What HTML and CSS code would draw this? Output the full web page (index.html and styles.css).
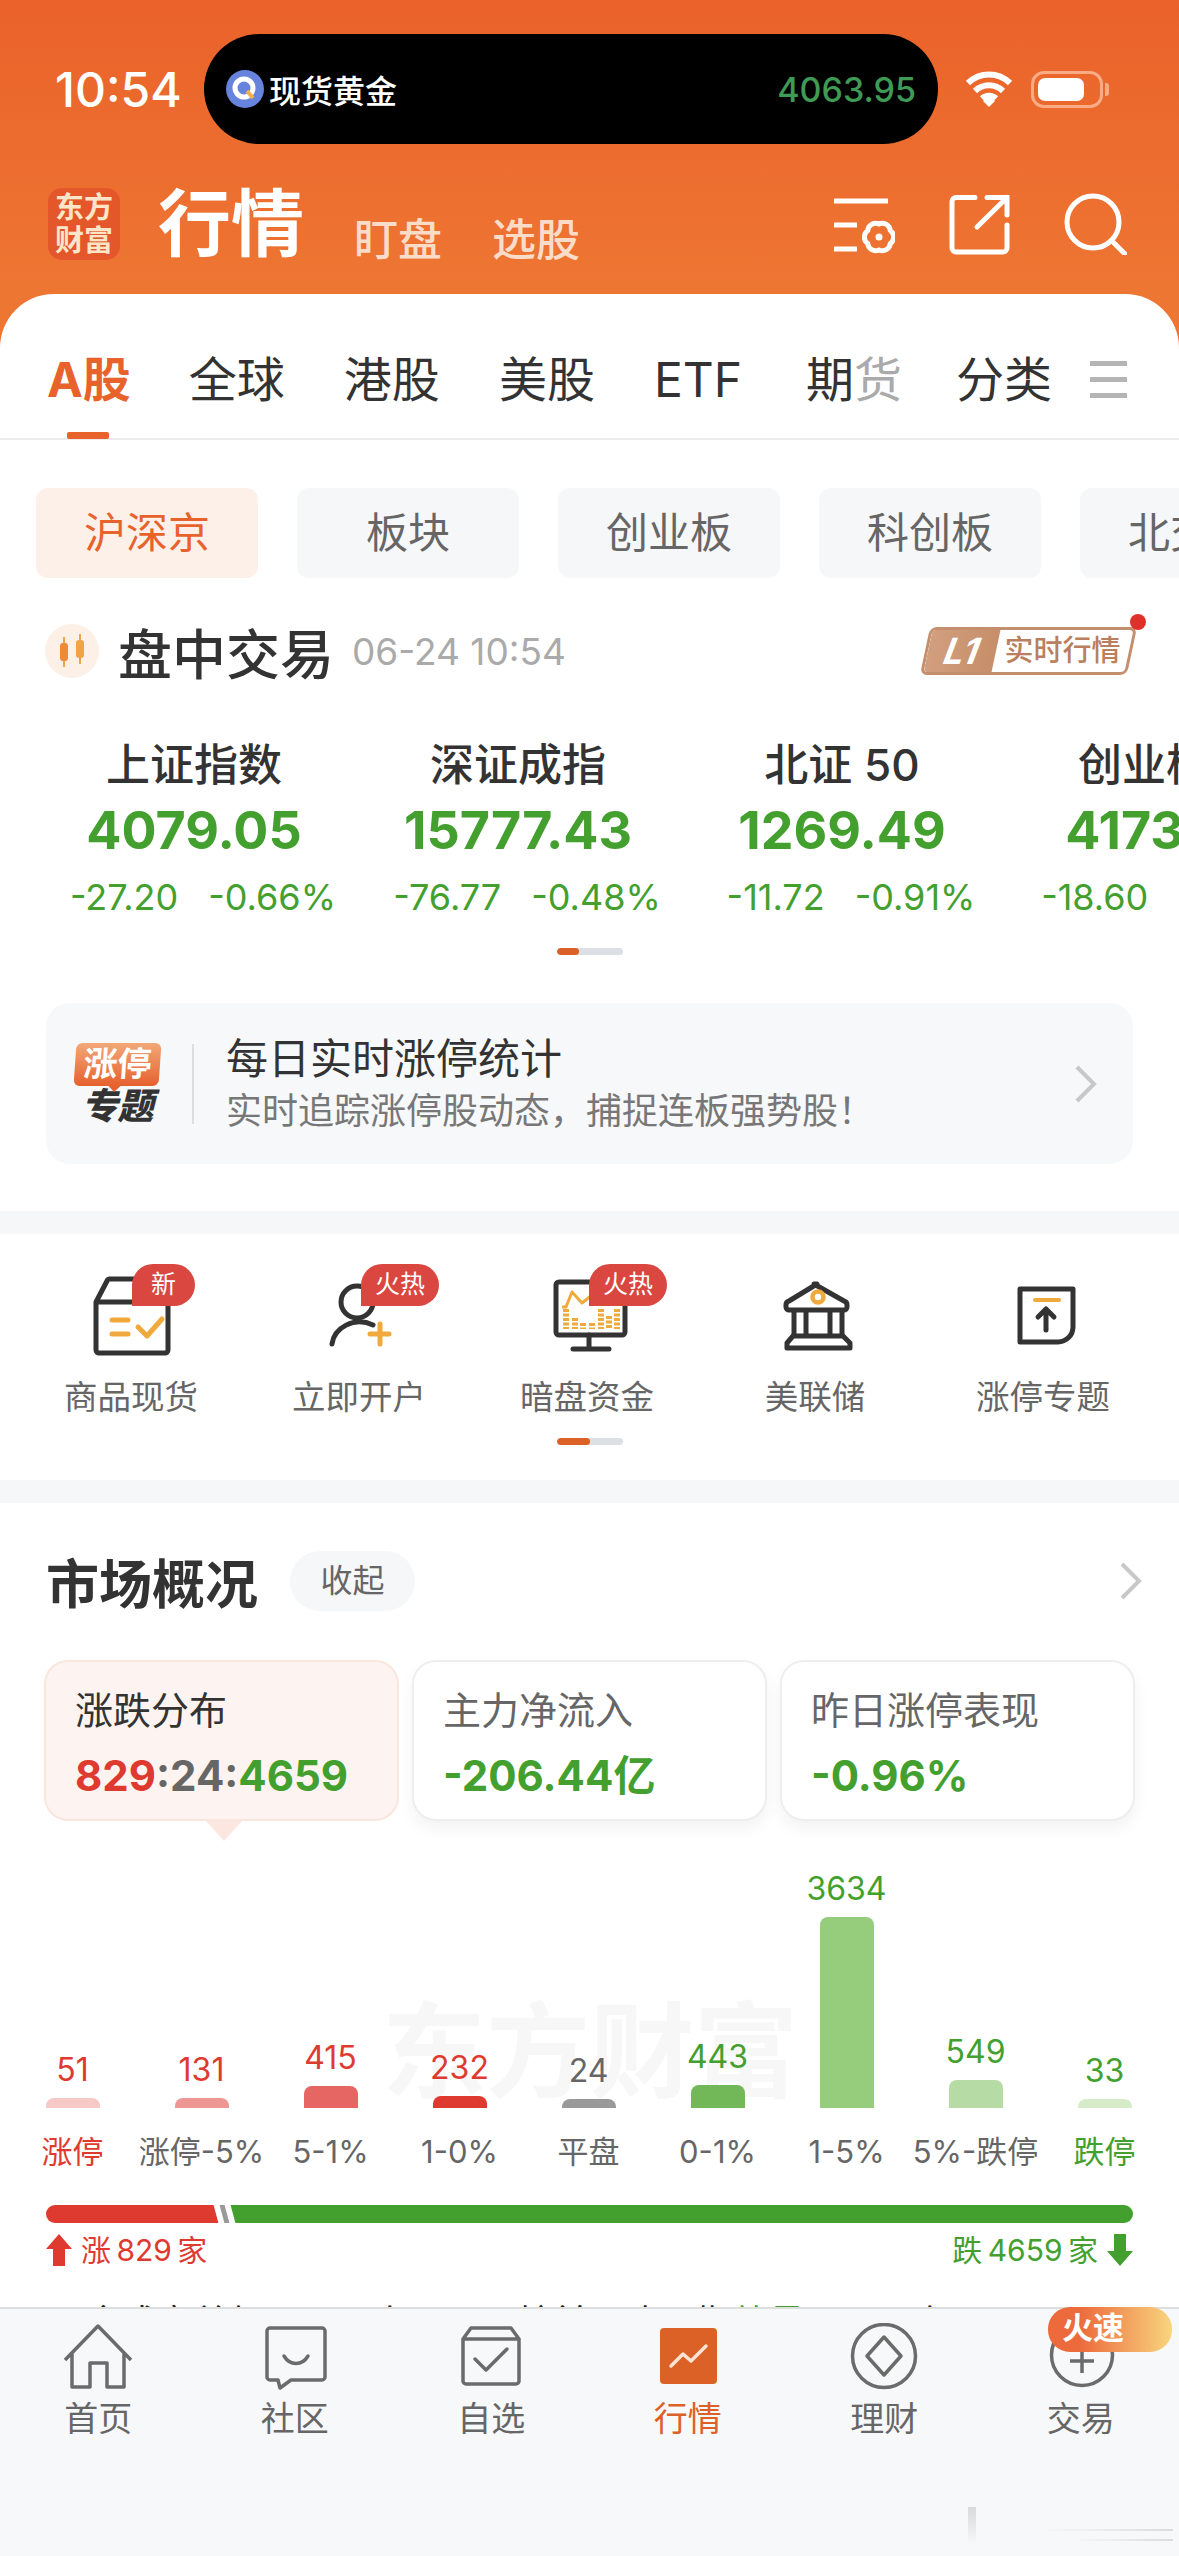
FILE: index.html
```html
<!DOCTYPE html>
<html lang="zh-CN">
<head>
    <meta charset="UTF-8">
    <meta name="viewport" content="width=device-width, initial-scale=1.0">
    <title>东方财富 - 行情</title>
    <link rel="stylesheet" href="styles.css">
</head>
<body>
<div class="page">
    <header class="hero">
        <div class="status">
            <span class="clock">10:54</span>
            <div class="island">
                <svg class="island-icon" viewBox="0 0 38 38">
                    <circle cx="19" cy="19" r="19" fill="#6684dd"/>
                    <circle cx="18" cy="18" r="9" fill="none" stroke="#fff" stroke-width="5"/>
                    <path d="M21 21l6 7" stroke="#f0b04a" stroke-width="4"/>
                </svg>
                <span class="island-name">现货黄金</span>
                <span class="island-price">4063.95</span>
            </div>
            <svg class="wifi" viewBox="0 0 46 36">
                <path d="M2 12a30 30 0 0 1 42 0M9 20a20 20 0 0 1 28 0M16 27.500a10 10 0 0 1 14 0" fill="none" stroke="#fff" stroke-width="6"/>
                <path d="M23 36l-6-6a8 8 0 0 1 12 0z" fill="#fff"/>
            </svg>
            <div class="battery"><div class="battery-fill"></div></div>
        </div>
        <div class="titlebar">
            <div class="logo">东方<br>财富</div>
            <h1 class="title">行情</h1>
            <span class="subtitle">盯盘</span>
            <span class="subtitle">选股</span>
            <div class="title-icons">
                <svg viewBox="0 0 64 62" fill="none" stroke="#fff" stroke-width="5">
                    <path d="M3 8h54M3 32h23M3 56h23"/>
                    <path d="M48 31A8 8 0 0 1 59.300 37.500A8 8 0 0 1 59.300 50.500A8 8 0 0 1 48 57A8 8 0 0 1 36.700 50.500A8 8 0 0 1 36.700 37.500A8 8 0 0 1 48 31Z"/>
                    <circle cx="48" cy="44" r="3.500" fill="#fff" stroke="none"/>
                </svg>
                <svg viewBox="0 0 64 62" fill="none" stroke="#fff" stroke-width="5" stroke-linecap="round">
                    <path d="M28 4.500H9a4 4 0 0 0-4 4V55a4 4 0 0 0 4 4h47a4 4 0 0 0 4-4V32"/>
                    <path d="M30 34L60 4.500M40 4.500h20V22"/>
                </svg>
                <svg viewBox="0 0 64 62" fill="none" stroke="#fff" stroke-width="5" stroke-linecap="round">
                    <circle cx="30" cy="29" r="26"/>
                    <path d="M51 50l11 11"/>
                </svg>
            </div>
        </div>
    </header>

    <main class="sheet">
        <nav class="tabs">
            <span class="tab tab-active">A股</span>
            <span class="tab">全球</span>
            <span class="tab">港股</span>
            <span class="tab">美股</span>
            <span class="tab">ETF</span>
            <span class="tab tab-futures">期<span class="tab-fade">货</span></span>
            <span class="tab">分类</span>
            <div class="tab-menu"><i></i><i></i><i></i></div>
        </nav>

        <div class="chips">
            <span class="chip chip-active">沪深京</span>
            <span class="chip">板块</span>
            <span class="chip">创业板</span>
            <span class="chip">科创板</span>
            <span class="chip">北交所</span>
        </div>

        <div class="session">
            <div class="session-icon">
                <svg viewBox="0 0 54 54">
                    <path d="M19 13v30M35 10v30" stroke="#f0a347" stroke-width="2"/>
                    <rect x="15" y="19" width="8" height="18" rx="3" fill="#ee8a35"/>
                    <rect x="31" y="16" width="8" height="18" rx="3" fill="#f0a347"/>
                </svg>
            </div>
            <span class="session-name">盘中交易</span>
            <span class="session-time">06-24 10:54</span>
            <div class="l1">
                <div class="l1-frame">
                    <span class="l1-tag">L1</span>
                    <span class="l1-text">实时行情</span>
                </div>
                <i class="l1-dot"></i>
            </div>
        </div>

        <div class="indices">
            <div class="index">
                <div class="index-name">上证指数</div>
                <div class="index-value">4079.05</div>
                <div class="index-sub"><span>-27.20</span><span>-0.66%</span></div>
            </div>
            <div class="index">
                <div class="index-name">深证成指</div>
                <div class="index-value">15777.43</div>
                <div class="index-sub"><span>-76.77</span><span>-0.48%</span></div>
            </div>
            <div class="index">
                <div class="index-name">北证 50</div>
                <div class="index-value">1269.49</div>
                <div class="index-sub"><span>-11.72</span><span>-0.91%</span></div>
            </div>
            <div class="index">
                <div class="index-name">创业板指</div>
                <div class="index-value">4173.26</div>
                <div class="index-sub"><span>-18.60</span><span>-0.44%</span></div>
            </div>
        </div>
        <div class="pager pager-short"><i></i></div>

        <div class="promo">
            <div class="promo-logo">
                <div class="promo-flag">涨停</div>
                <div class="promo-topic">专题</div>
            </div>
            <div class="promo-line"></div>
            <div class="promo-text">
                <div class="promo-title">每日实时涨停统计</div>
                <div class="promo-desc">实时追踪涨停股动态，捕捉连板强势股！</div>
            </div>
            <svg class="chevron promo-chevron" viewBox="0 0 22 38"><path d="M2 2l17 17L2 36"/></svg>
        </div>

        <div class="band"></div>

        <section class="shortcuts">
            <div class="shortcut-grid">
                <div class="shortcut">
                    <div class="shortcut-icon">
                        <svg viewBox="0 0 120 100" fill="none" stroke="#333" stroke-width="5" stroke-linejoin="round">
                            <path d="M25 40V88a3 3 0 0 0 3 3h66a3 3 0 0 0 3-3V40zM25 40l11-21a3 3 0 0 1 3-2h30"/>
                            <path d="M41 58h16M41 72h16M67 65l9 9 15-17" stroke="#f0a93c" stroke-linecap="round"/>
                        </svg>
                        <span class="tag tag-new">新</span>
                    </div>
                    <span class="shortcut-name">商品现货</span>
                </div>
                <div class="shortcut">
                    <div class="shortcut-icon">
                        <svg viewBox="0 0 120 100" fill="none" stroke="#333" stroke-width="5" stroke-linecap="round">
                            <circle cx="58" cy="40" r="16"/>
                            <path d="M33 82c2-16 22-28 41-19"/>
                            <path d="M71 72h19M81 62v20" stroke="#f0a93c"/>
                        </svg>
                        <span class="tag tag-hot">火热</span>
                    </div>
                    <span class="shortcut-name">立即开户</span>
                </div>
                <div class="shortcut">
                    <div class="shortcut-icon">
                        <svg viewBox="0 0 120 100" fill="none" stroke="#333" stroke-width="5" stroke-linejoin="round">
                            <rect x="29" y="20" width="69" height="53" rx="3"/>
                            <path d="M62 73v14M46 87h36" stroke-linecap="round"/>
                            <path d="M35 45h4l6-15 10 11 10-8" stroke="#f0a93c" stroke-width="3"/>
                            <path d="M39 47v20M48 56v11M56 61v6M65 61v6M74 47v20M82 54v13M90 47v20" stroke="#f0a93c" stroke-width="6" stroke-dasharray="3 1.500"/>
                        </svg>
                        <span class="tag tag-hot">火热</span>
                    </div>
                    <span class="shortcut-name">暗盘资金</span>
                </div>
                <div class="shortcut">
                    <div class="shortcut-icon">
                        <svg viewBox="0 0 120 100" fill="none" stroke="#333" stroke-width="5" stroke-linejoin="round">
                            <path d="M60 22l30 17a4 4 0 0 1 3 4v2a3 3 0 0 1-3 3H35a3 3 0 0 1-3-3v-2a4 4 0 0 1 3-4l28-17z" transform="translate(-1)"/>
                            <path d="M39 48v26M51 48v26M75 48v26M87 48v26"/>
                            <path d="M38 74h50l7 7v5H32v-5z"/>
                            <circle cx="63" cy="35" r="5.500" stroke="#f0a93c" stroke-width="4.500"/>
                        </svg>
                    </div>
                    <span class="shortcut-name">美联储</span>
                </div>
                <div class="shortcut">
                    <div class="shortcut-icon">
                        <svg viewBox="0 0 120 100" fill="none" stroke="#333" stroke-width="5" stroke-linecap="round" stroke-linejoin="round">
                            <path d="M37 27h53v38a15 15 0 0 1-15 15H37z"/>
                            <path d="M52 38h24" stroke="#f0a93c" stroke-width="4"/>
                            <path d="M63 68V47M55 55l8-8 8 8"/>
                        </svg>
                    </div>
                    <span class="shortcut-name">涨停专题</span>
                </div>
            </div>
            <div class="pager pager-long"><i></i></div>
        </section>

        <div class="band"></div>

        <section class="market">
            <div class="market-head">
                <h2 class="market-title">市场概况</h2>
                <span class="collapse">收起</span>
                <svg class="chevron market-chevron" viewBox="0 0 22 38"><path d="M2 2l17 17L2 36"/></svg>
            </div>

            <div class="cards">
                <div class="card card-active">
                    <div class="card-title">涨跌分布</div>
                    <div class="card-value"><span class="up">829</span><span class="flat">:24:</span><span class="down">4659</span></div>
                </div>
                <div class="card">
                    <div class="card-title">主力净流入</div>
                    <div class="card-value down">-206.44亿</div>
                </div>
                <div class="card">
                    <div class="card-title">昨日涨停表现</div>
                    <div class="card-value down">-0.96%</div>
                </div>
            </div>

            <div class="chart">
                <div class="watermark">东方财富</div>
                <div class="col"><span class="col-num up">51</span><div class="bar bar-up1"></div></div>
                <div class="col"><span class="col-num up">131</span><div class="bar bar-up2"></div></div>
                <div class="col"><span class="col-num up">415</span><div class="bar bar-up3"></div></div>
                <div class="col"><span class="col-num up">232</span><div class="bar bar-up4"></div></div>
                <div class="col"><span class="col-num flat">24</span><div class="bar bar-flat"></div></div>
                <div class="col"><span class="col-num down">443</span><div class="bar bar-down1"></div></div>
                <div class="col"><span class="col-num down">3634</span><div class="bar bar-down2"></div></div>
                <div class="col"><span class="col-num down">549</span><div class="bar bar-down3"></div></div>
                <div class="col"><span class="col-num down">33</span><div class="bar bar-down4"></div></div>
            </div>
            <div class="axis">
                <span class="up">涨停</span>
                <span>涨停-5%</span>
                <span>5-1%</span>
                <span>1-0%</span>
                <span>平盘</span>
                <span>0-1%</span>
                <span>1-5%</span>
                <span>5%-跌停</span>
                <span class="down">跌停</span>
            </div>

            <div class="ratio">
                <div class="ratio-up"></div>
                <div class="ratio-flat"></div>
                <div class="ratio-down"></div>
            </div>
            <div class="totals">
                <span class="total up">
                    <svg viewBox="0 0 26 32"><path d="M13 0l13 15h-7v17H7V15H0z" fill="#df3a30"/></svg>
                    涨&thinsp;829&thinsp;家
                </span>
                <span class="total down">
                    跌&thinsp;4659&thinsp;家
                    <svg viewBox="0 0 26 32"><path d="M13 32L0 17h7V0h12v17h7z" fill="#43a02f"/></svg>
                </span>
            </div>
            <div class="next-row">今成交总额　　　上　　　较前一昨日期<span class="down">放量</span>　　　上</div>
        </section>
    </main>

    <nav class="tabbar">
        <div class="tabitem">
            <svg viewBox="0 0 80 70" fill="none" stroke="#6b6b6b" stroke-width="3.500" stroke-linejoin="round">
                <path d="M7 37L40 3l33 34M14 30v34h18V40h17v24h17V30"/>
            </svg>
            <span>首页</span>
        </div>
        <div class="tabitem">
            <svg viewBox="0 0 80 70" fill="none" stroke="#6b6b6b" stroke-width="3.500" stroke-linejoin="round" stroke-linecap="round">
                <path d="M15 5h52a3 3 0 0 1 3 3v46a3 3 0 0 1-3 3H36l-11 8-2-8h-8a3 3 0 0 1-3-3V8a3 3 0 0 1 3-3z"/>
                <path d="M29 33c6 10 18 10 24 0"/>
            </svg>
            <span>社区</span>
        </div>
        <div class="tabitem">
            <svg viewBox="0 0 80 70" fill="none" stroke="#6b6b6b" stroke-width="3.500" stroke-linejoin="round" stroke-linecap="round">
                <path d="M12 16h56v42a3 3 0 0 1-3 3H15a3 3 0 0 1-3-3zM12 16l8-11h40l8 11"/>
                <path d="M24 36l11 11 21-21"/>
            </svg>
            <span>自选</span>
        </div>
        <div class="tabitem tabitem-active">
            <svg viewBox="0 0 80 70" fill="none">
                <rect x="12" y="5" width="57" height="56" rx="4" fill="#dc6127"/>
                <path d="M23 43l12-12 8 7 15-15" stroke="#fde3d2" stroke-width="3.500" stroke-linecap="round" stroke-linejoin="round"/>
            </svg>
            <span>行情</span>
        </div>
        <div class="tabitem">
            <svg viewBox="0 0 80 70" fill="none" stroke="#6b6b6b" stroke-width="3.500" stroke-linejoin="round">
                <circle cx="40" cy="33" r="31.500"/>
                <path d="M40 14l17 19-17 19-17-19z"/>
            </svg>
            <span>理财</span>
        </div>
        <div class="tabitem">
            <svg viewBox="0 0 80 70" fill="none" stroke="#6b6b6b" stroke-width="3.500">
                <circle cx="41" cy="32" r="30.500"/>
                <path d="M29 38h24M41 26v24"/>
            </svg>
            <span>交易</span>
        </div>
        <span class="speed">火速</span>
    </nav>

    <div class="stamp">
        <i class="stamp-bar"></i>
        <i class="stamp-line stamp-line-a"></i>
        <i class="stamp-line stamp-line-b"></i>
    </div>
</div>
</body>
</html>
```

FILE: styles.css
```css
* {
    box-sizing: border-box;
}
body {
    margin: 0;
    padding: 0;
    background-color: #fff;
    font-family: Inter, "Noto Sans CJK SC", sans-serif;
}
svg {
    display: block;
}
h1, h2 {
    margin: 0;
}
.page {
    position: relative;
    width: 1179px;
    height: 2556px;
    overflow: hidden;
    background-color: #fff;
}
.up {
    color: #df3a30;
}
.down {
    color: #43a02f;
}
.flat {
    color: #666;
}

/* header */
.hero {
    height: 348px;
    padding-top: 34px;
    background: linear-gradient(180deg, #ea622a 0, #ee7633 294px);
}
.status {
    display: flex;
    align-items: center;
    height: 110px;
    padding-left: 55px;
}
.clock {
    width: 149px;
    font-size: 48px;
    font-weight: 500;
    white-space: nowrap;
    color: #fff;
}
.island {
    display: flex;
    align-items: center;
    width: 734px;
    height: 110px;
    padding: 0 22px;
    border-radius: 55px;
    background-color: #000;
}
.island-icon {
    width: 38px;
    height: 38px;
}
.island-name {
    margin-left: 5px;
    font-size: 32px;
    font-weight: 500;
    color: #fff;
}
.island-price {
    margin-left: auto;
    font-size: 34px;
    font-weight: 500;
    color: #3f9a55;
}
.wifi {
    width: 46px;
    height: 36px;
    margin-left: 28px;
}
.battery {
    position: relative;
    width: 72px;
    height: 37px;
    margin-left: 19px;
    padding: 4px;
    border: 3px solid #f8ab85;
    border-radius: 13px;
}
.battery::after {
    content: "";
    position: absolute;
    right: -9px;
    top: 9px;
    width: 4px;
    height: 13px;
    border-radius: 0 3px 3px 0;
    background-color: #f8ab85;
}
.battery-fill {
    width: 46px;
    height: 100%;
    border-radius: 7px;
    background-color: #fff;
}
.titlebar {
    display: flex;
    align-items: flex-end;
    margin-top: 44px;
    padding: 0 52px 0 48px;
}
.logo {
    width: 72px;
    height: 72px;
    padding-top: 3px;
    border-radius: 14px;
    background-color: #e4572a;
    color: #fde6c8;
    font-size: 29px;
    font-weight: 700;
    line-height: 33px;
    text-align: center;
}
.title {
    margin-left: 38px;
    font-size: 73px;
    font-weight: 700;
    line-height: 72px;
    color: #fff;
}
.subtitle {
    margin-left: 50px;
    font-size: 44px;
    font-weight: 500;
    line-height: 40px;
    color: #fbdcc8;
}
.title-icons {
    display: flex;
    gap: 52px;
    margin-left: auto;
    align-self: center;
}
.title-icons svg {
    width: 64px;
    height: 62px;
}

/* main sheet */
.sheet {
    position: relative;
    margin-top: -54px;
    background-color: #fff;
    border-radius: 54px 54px 0 0;
}
.tabs {
    display: flex;
    align-items: flex-start;
    gap: 59px;
    height: 146px;
    padding: 56px 54px 0 47px;
    border-bottom: 2px solid #ececec;
}
.tab {
    position: relative;
    flex-shrink: 0;
    font-size: 48px;
    line-height: 60px;
    white-space: nowrap;
    color: #333;
}
.tab-active {
    margin-right: -1px;
    font-weight: 700;
    color: #e8622c;
}
.tab-active::after {
    content: "";
    position: absolute;
    left: 20px;
    top: 82px;
    width: 42px;
    height: 7px;
    border-radius: 2px;
    background-color: #e8622c;
}
.tab-futures {
    margin: 0 -5px 0 5px;
}
.tab-fade {
    color: #aaa;
}
.tab-menu {
    display: flex;
    flex-direction: column;
    flex-shrink: 0;
    gap: 11px;
    width: 37px;
    margin: 11px 0 0 -21px;
}
.tab-menu i {
    height: 5px;
    background-color: #b5b5b5;
}
.chips {
    display: flex;
    gap: 39px;
    margin-top: 48px;
    padding-left: 36px;
}
.chip {
    flex: 0 0 222px;
    height: 90px;
    border-radius: 12px;
    background-color: #f6f7f9;
    font-size: 42px;
    line-height: 90px;
    text-align: center;
    color: #666;
}
.chip-active {
    background-color: #fdf0e8;
    color: #e8622c;
}
.session {
    position: relative;
    display: flex;
    align-items: center;
    height: 56px;
    margin-top: 45px;
    padding-left: 45px;
}
.session-icon {
    width: 54px;
    height: 54px;
    border-radius: 50%;
    background-color: #fdf0e6;
}
.session-name {
    margin-left: 19px;
    font-size: 54px;
    font-weight: 500;
    color: #333;
}
.session-time {
    margin-left: 18px;
    font-size: 37px;
    color: #aaa;
}
.l1 {
    position: relative;
    width: 212px;
    height: 48px;
    margin-left: auto;
    margin-right: 47px;
}
.l1-frame {
    display: flex;
    height: 48px;
    margin-left: 5px;
    border: 3px solid #c48f6e;
    border-radius: 7px;
    overflow: hidden;
    transform: skewX(-12deg);
}
.l1-tag {
    width: 68px;
    background: linear-gradient(90deg, #d29f7e, #c68e69);
    font-size: 36px;
    font-weight: 700;
    font-style: italic;
    line-height: 42px;
    text-align: center;
    color: #fff;
}
.l1-text {
    flex: 1;
    font-size: 29px;
    font-weight: 500;
    line-height: 42px;
    text-align: center;
    color: #b97f5e;
    transform: skewX(12deg);
}
.l1-dot {
    position: absolute;
    right: -14px;
    top: -13px;
    width: 16px;
    height: 16px;
    border-radius: 50%;
    background-color: #e0302a;
}
.indices {
    display: flex;
    margin-top: 56px;
    padding-left: 32px;
}
.index {
    flex: 0 0 324px;
    text-align: center;
}
.index-name {
    font-size: 44px;
    font-weight: 500;
    line-height: 60px;
    color: #333;
}
.index-value {
    font-size: 52px;
    font-weight: 700;
    line-height: 72px;
    color: #43a02f;
}
.index-sub {
    display: flex;
    justify-content: center;
    gap: 30px;
    padding-left: 18px;
    font-size: 36px;
    line-height: 60px;
    white-space: nowrap;
    color: #43a02f;
}
.pager {
    width: 66px;
    height: 7px;
    margin: 0 auto;
    border-radius: 4px;
    background-color: #dcdfe3;
    overflow: hidden;
}
.pager i {
    display: block;
    height: 100%;
    border-radius: 4px;
    background-color: #dc6127;
}
.pager-short {
    margin-top: 21px;
}
.pager-short i {
    width: 22px;
}
.pager-long {
    margin-top: 16px;
}
.pager-long i {
    width: 33px;
}
.promo {
    display: flex;
    align-items: center;
    height: 161px;
    margin: 48px 46px 47px;
    padding-left: 29px;
    border-radius: 24px;
    background-color: #f7f8fa;
}
.promo-logo {
    width: 85px;
    text-align: center;
}
.promo-flag {
    position: relative;
    height: 43px;
    border-radius: 6px;
    background: linear-gradient(180deg, #f2a878, #e6612e);
    font-size: 34px;
    font-weight: 700;
    line-height: 42px;
    color: #fff;
    transform: skewX(-4deg);
}
.promo-flag::after {
    content: "";
    position: absolute;
    left: 35px;
    top: 43px;
    border: 6px solid transparent;
    border-top-color: #e6612e;
}
.promo-topic {
    margin-top: 2px;
    font-size: 36px;
    font-weight: 900;
    font-style: italic;
    line-height: 36px;
    color: #333;
}
.promo-line {
    width: 2px;
    height: 80px;
    margin: 0 32px;
    background-color: #dedede;
}
.promo-text {
    flex: 1;
}
.promo-title {
    font-size: 42px;
    line-height: 54px;
    color: #333;
}
.promo-desc {
    font-size: 36px;
    line-height: 50px;
    color: #777;
}
.chevron {
    width: 22px;
    height: 38px;
    fill: none;
    stroke: #c8c8c8;
    stroke-width: 4;
}
.promo-chevron {
    margin-right: 36px;
}
.band {
    height: 23px;
    background-color: #f6f7f9;
}

/* shortcuts */
.shortcuts {
    height: 246px;
    padding-top: 28px;
}
.shortcut-grid {
    display: grid;
    grid-template-columns: repeat(5, 228px);
    padding-left: 17px;
}
.shortcut {
    display: flex;
    flex-direction: column;
    align-items: center;
}
.shortcut-icon {
    position: relative;
    width: 120px;
    height: 100px;
}
.shortcut-icon svg {
    width: 120px;
    height: 100px;
}
.tag {
    position: absolute;
    top: 2px;
    height: 42px;
    border-radius: 21px 21px 21px 0;
    background-color: #d94740;
    font-size: 25px;
    line-height: 40px;
    text-align: center;
    color: #fff;
}
.tag-new {
    left: 61px;
    width: 63px;
}
.tag-hot {
    left: 62px;
    width: 78px;
}
.shortcut-name {
    margin-top: 10px;
    font-size: 33.500px;
    line-height: 50px;
    color: #666;
}

/* market */
.market {
    padding-top: 48px;
}
.market-head {
    display: flex;
    align-items: center;
    height: 60px;
    padding: 0 37px 0 46px;
}
.market-title {
    font-size: 53px;
    font-weight: 700;
    color: #333;
}
.collapse {
    width: 125px;
    height: 60px;
    margin-left: 32px;
    border-radius: 30px;
    background-color: #f6f7f9;
    font-size: 32px;
    line-height: 60px;
    text-align: center;
    color: #666;
}
.market-chevron {
    margin-left: auto;
}
.cards {
    display: flex;
    gap: 13px;
    margin-top: 49px;
    padding-left: 44px;
}
.card {
    position: relative;
    width: 355px;
    height: 161px;
    padding: 20px 0 0 29px;
    border: 2px solid #eee;
    border-radius: 24px;
    background-color: #fff;
    box-shadow: 0 8px 16px rgba(0, 0, 0, 0.05);
}
.card-active {
    border-color: #fae6de;
    background-color: #fdf4f1;
    box-shadow: none;
}
.card-active::after {
    content: "";
    position: absolute;
    left: 160px;
    top: 159px;
    border: 18px solid transparent;
    border-top: 20px solid #fbe7e0;
    border-bottom: 0;
}
.card-title {
    font-size: 38px;
    line-height: 56px;
    color: #666;
}
.card-active .card-title {
    color: #333;
}
.card-value {
    margin-top: 10px;
    font-size: 42px;
    font-weight: 700;
    line-height: 56px;
    white-space: nowrap;
}
.chart {
    position: relative;
    display: grid;
    grid-template-columns: repeat(9, 129px);
    align-items: end;
    height: 287px;
    padding-left: 8px;
}
.watermark {
    position: absolute;
    left: 382px;
    bottom: 0;
    font-size: 104px;
    font-weight: 700;
    line-height: 112px;
    white-space: nowrap;
    color: #f7f7f7;
}
.col {
    position: relative;
    display: flex;
    flex-direction: column;
    align-items: center;
}
.col-num {
    font-size: 32px;
    line-height: 38px;
    margin-bottom: 9px;
}
.bar {
    width: 54px;
    border-radius: 8px 8px 0 0;
}
.bar-up1 { height: 10px; background-color: #f6c8c6; }
.bar-up2 { height: 10px; background-color: #ee9693; }
.bar-up3 { height: 22px; background-color: #e56663; }
.bar-up4 { height: 12px; background-color: #df3a30; }
.bar-flat { height: 9px; background-color: #999; }
.bar-down1 { height: 23px; background-color: #72b858; }
.bar-down2 { height: 191px; background-color: #95cd7d; }
.bar-down3 { height: 28px; background-color: #b6dba4; }
.bar-down4 { height: 9px; background-color: #d6ecc9; }
.axis {
    display: grid;
    grid-template-columns: repeat(9, 129px);
    margin-top: 22px;
    padding-left: 8px;
    font-size: 31px;
    line-height: 44px;
    text-align: center;
    white-space: nowrap;
    color: #666;
}
.ratio {
    display: flex;
    height: 18px;
    margin: 31px 46px 0;
    border-radius: 9px;
    overflow: hidden;
}
.ratio-up {
    width: 180px;
    margin-left: -10px;
    background-color: #df3a30;
    transform: skewX(15deg);
}
.ratio-flat {
    width: 5px;
    margin-left: 6px;
    background-color: #999;
    transform: skewX(15deg);
}
.ratio-down {
    flex: 1;
    margin: 0 -10px 0 6px;
    background-color: #43a02f;
    transform: skewX(15deg);
}
.totals {
    display: flex;
    justify-content: space-between;
    margin-top: 5px;
    padding: 0 46px;
}
.total {
    display: flex;
    align-items: center;
    gap: 9px;
    font-size: 30px;
    line-height: 44px;
}
.total svg {
    width: 26px;
    height: 32px;
}
.next-row {
    margin-top: 26px;
    padding-left: 85px;
    font-size: 36px;
    line-height: 50px;
    white-space: nowrap;
    color: #222;
}

/* bottom bar */
.tabbar {
    position: absolute;
    left: 0;
    right: 0;
    bottom: 0;
    display: grid;
    grid-template-columns: repeat(6, 1fr);
    align-items: start;
    height: 249px;
    padding-top: 14px;
    border-top: 2px solid #dedede;
    background-color: #f7f8fa;
}
.tabitem {
    display: flex;
    flex-direction: column;
    align-items: center;
    font-size: 34px;
    line-height: 44px;
    color: #666;
}
.tabitem svg {
    width: 80px;
    height: 70px;
    margin-bottom: 4px;
}
.tabitem-active {
    color: #dc6127;
}
.speed {
    position: absolute;
    right: 7px;
    top: -2px;
    width: 124px;
    height: 45px;
    padding-left: 14px;
    border-radius: 22px;
    background: linear-gradient(90deg, #ec6a3c 25%, #f8d57e 100%);
    font-size: 31px;
    font-weight: 700;
    line-height: 42px;
    color: #fff;
}
.stamp i {
    position: absolute;
    display: block;
}
.stamp-bar {
    left: 968px;
    top: 2507px;
    width: 8px;
    height: 38px;
    background: linear-gradient(180deg, #d9d9d9, #f7f8fa);
}
.stamp-line {
    right: 6px;
    height: 2px;
    background: linear-gradient(90deg, #f7f8fa, #dcdcdc);
}
.stamp-line-a {
    top: 2529px;
    width: 130px;
}
.stamp-line-b {
    top: 2539px;
    width: 100px;
}
```
